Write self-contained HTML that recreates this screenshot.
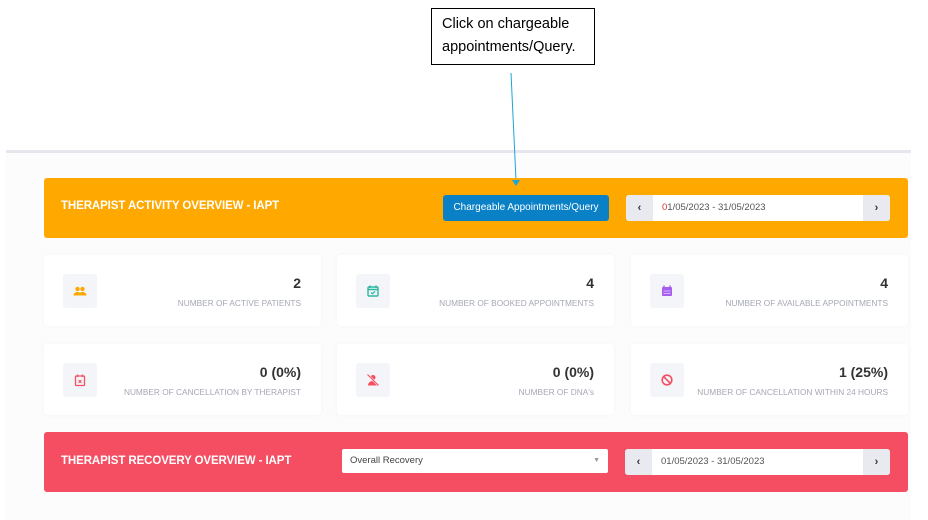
<!DOCTYPE html>
<html><head><meta charset="utf-8"><style>
*{box-sizing:border-box;margin:0;padding:0}
body{width:928px;height:520px;background:#fff;font-family:"Liberation Sans",sans-serif;position:relative;overflow:hidden}
.abs{position:absolute}
.callout{left:431px;top:8px;width:164px;height:57px;border:1px solid #000;font-size:14.5px;line-height:23px;padding:4px 0 0 10px;color:#000;background:#fff}
.rule{left:6px;top:150px;width:905px;height:3px;background:#e6e6ef}
.bg{left:6px;top:153px;width:905px;height:367px;background:#fcfcfd}
.bar{left:44px;width:864px;height:60px;border-radius:3px}
.bar h2{position:absolute;left:17px;top:22px;color:#fff;font-size:11.5px;font-weight:bold;letter-spacing:-.1px}
.btn{left:443px;top:195px;width:166px;height:26px;background:#0a80c6;border-radius:3px;color:#fff;font-size:10px;text-align:center;line-height:26px}
.date{height:26px;background:#fff;border-radius:3px;overflow:hidden}
.date .ar{position:absolute;top:0;width:27px;height:26px;background:#e8eaf0;color:#333;font-weight:bold;font-size:11px;text-align:center;line-height:26px}
.date span{position:absolute;left:36px;top:0;line-height:26px;font-size:9.5px;color:#555}
.card{width:277px;height:71px;background:#fff;border-radius:4px;box-shadow:0 0 6px rgba(0,0,0,.03)}
.card .ic{position:absolute;left:19px;top:19px;width:34px;height:34px;background:#f3f5f9;border-radius:3px}
.card .ic svg{position:absolute;left:10px;top:10px}
.card .v{position:absolute;right:20px;top:20px;font-size:14px;font-weight:bold;color:#333}
.card .l{position:absolute;right:20px;top:43px;font-size:8.3px;color:#a5a8b5;white-space:nowrap}
</style></head><body>
<div class="abs bg"></div>
<div class="abs rule"></div>
<div class="abs callout">Click on chargeable appointments/Query.</div>
<svg class="abs" style="left:0;top:0" width="928" height="200"><line x1="511" y1="73" x2="516" y2="180" stroke="#1ba5d8" stroke-width="1"/></svg>

<div class="abs bar" style="top:178px;background:#ffa800"><h2>THERAPIST ACTIVITY OVERVIEW - IAPT</h2></div>
<svg class="abs" style="left:0;top:0" width="928" height="200"><path d="M512 180 L520 180 L516 186 Z" fill="#1ba5d8"/></svg>
<div class="abs btn">Chargeable Appointments/Query</div>
<div class="abs date" style="left:626px;top:195px;width:264px"><div class="ar" style="left:0">‹</div><span><b style="color:#c33;font-weight:normal">0</b>1/05/2023 - 31/05/2023</span><div class="ar" style="right:0">›</div></div>

<div class="abs card" style="left:44px;top:255px"><div class="ic"><svg width="14" height="14" viewBox="0 0 14 14"><circle cx="4.5" cy="5" r="2.2" fill="#ffa800"/><circle cx="9.5" cy="5" r="2.2" fill="#ffa800"/><path d="M0.5 11.5c0-2.5 2-3.5 4-3.5s4 1 4 3.5zM5.5 11.5c0-2.5 2-3.5 4-3.5s4 1 4 3.5z" fill="#ffa800"/></svg></div><div class="v">2</div><div class="l">NUMBER OF ACTIVE PATIENTS</div></div>
<div class="abs card" style="left:337px;top:255px"><div class="ic"><svg width="14" height="14" viewBox="0 0 14 14"><rect x="2" y="3" width="10" height="9" rx="1" fill="none" stroke="#2bb8a0" stroke-width="1.4"/><path d="M4 1.5v2.5M10 1.5v2.5M2 5.5h10" stroke="#2bb8a0" stroke-width="1.4"/><path d="M5 8.5l1.5 1.3L9 7.3" stroke="#2bb8a0" stroke-width="1.2" fill="none"/></svg></div><div class="v">4</div><div class="l">NUMBER OF BOOKED APPOINTMENTS</div></div>
<div class="abs card" style="left:631px;top:255px"><div class="ic"><svg width="14" height="14" viewBox="0 0 14 14"><rect x="2" y="3" width="10" height="9" rx="1" fill="#a55ef0"/><path d="M4 1.5v2.5M10 1.5v2.5" stroke="#a55ef0" stroke-width="1.4"/><path d="M3.5 7h7M3.5 9.5h7" stroke="#e6d6fc" stroke-width=".8"/></svg></div><div class="v">4</div><div class="l">NUMBER OF AVAILABLE APPOINTMENTS</div></div>

<div class="abs card" style="left:44px;top:344px"><div class="ic"><svg width="14" height="14" viewBox="0 0 14 14"><rect x="2.5" y="3" width="9" height="9.5" rx="1" fill="none" stroke="#f44e60" stroke-width="1.3"/><path d="M4.5 1.5v2.5M9.5 1.5v2.5" stroke="#f44e60" stroke-width="1.3"/><path d="M5.5 7l3 3M8.5 7l-3 3" stroke="#f44e60" stroke-width="1"/></svg></div><div class="v">0 (0%)</div><div class="l">NUMBER OF CANCELLATION BY THERAPIST</div></div>
<div class="abs card" style="left:337px;top:344px"><div class="ic"><svg width="14" height="14" viewBox="0 0 14 14"><circle cx="7" cy="4.5" r="2.5" fill="#f44e60"/><path d="M2 12.5c0-3 2.5-4.5 5-4.5s5 1.5 5 4.5z" fill="#f44e60"/><path d="M1.5 1.5l11 11" stroke="#f3f5f9" stroke-width="2.2"/><path d="M1.5 1.5l11 11" stroke="#f44e60" stroke-width="1.1"/></svg></div><div class="v">0 (0%)</div><div class="l">NUMBER OF DNA's</div></div>
<div class="abs card" style="left:631px;top:344px"><div class="ic"><svg width="14" height="14" viewBox="0 0 14 14"><circle cx="7" cy="7" r="4.8" fill="none" stroke="#f44e60" stroke-width="1.6"/><path d="M3.8 3.8l6.4 6.4" stroke="#f44e60" stroke-width="1.6"/></svg></div><div class="v">1 (25%)</div><div class="l">NUMBER OF CANCELLATION WITHIN 24 HOURS</div></div>

<div class="abs bar" style="top:432px;background:#f54d61"><h2 style="top:23px">THERAPIST RECOVERY OVERVIEW - IAPT</h2></div>
<div class="abs" style="left:342px;top:449px;width:266px;height:24px;background:#fff;border-radius:2px;font-size:9.5px;color:#444;line-height:24px;padding-left:8px">Overall Recovery<span style="position:absolute;right:8px;top:0;color:#999;font-size:7px">▼</span></div>
<div class="abs date" style="left:625px;top:449px;width:265px"><div class="ar" style="left:0">‹</div><span>01/05/2023 - 31/05/2023</span><div class="ar" style="right:0">›</div></div>
</body></html>
